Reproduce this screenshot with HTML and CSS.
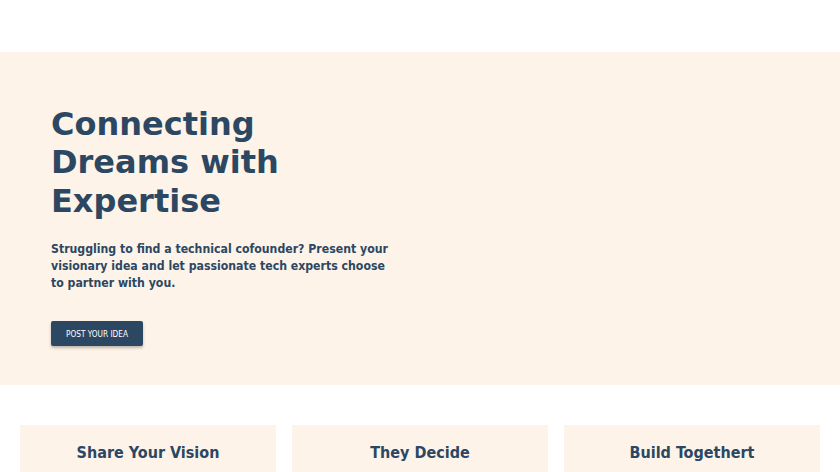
FILE: index.html
```html
<!DOCTYPE html>
<html lang="en">
<head>
  <meta charset="UTF-8">
  <meta name="viewport" content="width=device-width, initial-scale=1.0">
  <title>Connecting Dreams with Expertise</title>
  <link rel="stylesheet" href="styles.css">
</head>
<body>
  <header class="topbar"></header>

  <section class="hero">
    <h1 class="hero-title">Connecting<br>Dreams with<br>Expertise</h1>
    <p class="hero-text">Struggling to find a technical cofounder? Present your visionary idea and let passionate tech experts choose to partner with you.</p>
    <button type="button" class="hero-btn">POST YOUR IDEA</button>
  </section>

  <section class="steps">
    <div class="step-card">
      <h2>Share Your Vision</h2>
    </div>
    <div class="step-card">
      <h2>They Decide</h2>
    </div>
    <div class="step-card">
      <h2>Build Togethert</h2>
    </div>
  </section>
</body>
</html>
```

FILE: styles.css
```css
/* Landing page */
body {
  margin: 0;
  font-family: "DejaVu Sans", sans-serif;
  color: #2c4762;
  background: #fff;
}
.topbar {
  height: 52px;
}
.hero {
  background: #fdf3e9;
  padding: 53px 51px 39px;
}
.hero-title {
  margin: 0;
  font-size: 32px;
  line-height: 1.2;
  font-weight: bold;
}
.hero-text {
  margin: 21px 0 0;
  max-width: 350px;
  font-family: "DejaVu Sans Condensed", "DejaVu Sans", sans-serif;
  font-size: 12.2px;
  line-height: 17px;
  font-weight: bold;
}
.hero-btn {
  display: block;
  margin-top: 29px;
  width: 92px;
  height: 25px;
  padding: 0;
  border: none;
  border-radius: 2px;
  background: #2c4762;
  color: #fff;
  font-family: "DejaVu Sans Condensed", "DejaVu Sans", sans-serif;
  font-size: 8.2px;
  box-shadow: 0 2px 3px rgba(0, 0, 0, 0.25);
}
.steps {
  display: grid;
  grid-template-columns: repeat(3, 1fr);
  gap: 16px;
  padding: 40px 20px;
}
.step-card {
  background: #fdf3e9;
  padding: 18px 10px 60px;
  text-align: center;
}
.step-card h2 {
  margin: 0;
  font-family: "DejaVu Sans Condensed", "DejaVu Sans", sans-serif;
  font-size: 16px;
  font-weight: bold;
}
```
